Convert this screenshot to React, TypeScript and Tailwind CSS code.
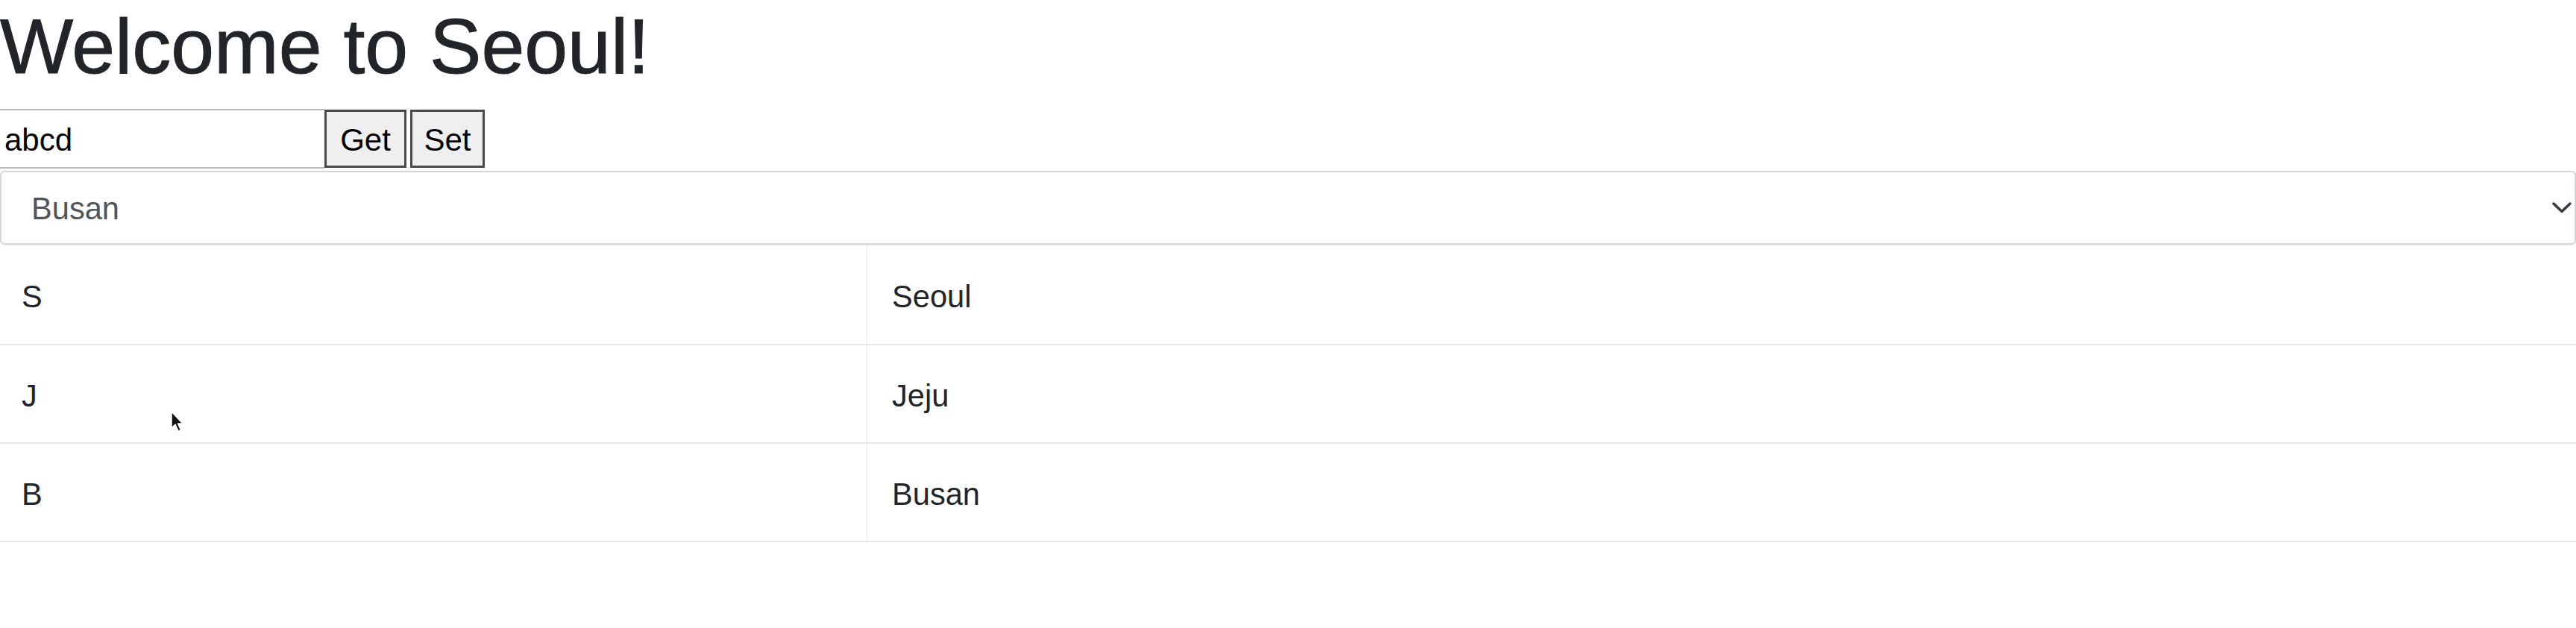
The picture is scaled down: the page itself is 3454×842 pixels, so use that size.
import React from "react";

const rows = [
  { k: "S", v: "Seoul", h: "h-[135px]" },
  { k: "J", v: "Jeju", h: "h-[132px]" },
  { k: "B", v: "Busan", h: "h-[132px]" },
];

export default function App() {
  return (
    <div className="relative w-[3454px] h-[842px] overflow-hidden bg-white text-[#212529] font-['Liberation_Sans',Arial,Helvetica,sans-serif]">
      <h1 className="m-0 mb-[21px] text-[104px] leading-[1.2] font-normal text-[#212529] [-webkit-text-stroke:1px_#212529]">
        Welcome to Seoul!
      </h1>

      <div className="flex items-center h-[80px]">
        <input
          readOnly
          value="abcd"
          className="w-[435px] h-[80px] border-y-2 border-l-0 border-r-0 border-[#b8b8b8] pl-[6px] pt-[5px] text-[42px] text-black outline-none bg-white font-['Liberation_Sans',Arial,sans-serif]"
        />
        <button className="w-[110px] h-[78px] bg-[#efefef] border-[3px] border-[#4a4a4a] pt-[4px] text-[42px] text-black leading-none flex items-center justify-center font-['Liberation_Sans',Arial,sans-serif]">
          Get
        </button>
        <button className="ml-[5px] w-[100px] h-[78px] bg-[#efefef] border-[3px] border-[#4a4a4a] pt-[4px] text-[42px] text-black leading-none flex items-center justify-center font-['Liberation_Sans',Arial,sans-serif]">
          Set
        </button>
      </div>

      <div className="mt-[3px] h-[99px] w-full border-2 border-[#d3d6da] rounded-[6px] flex items-center justify-between pl-[40px] pr-[4px] text-[41.6px] text-[#505559] shadow-[0_1px_2px_rgba(0,0,0,0.08)]">
        <span className="pt-[4px]">Busan</span>
        <svg width="26" height="15" viewBox="0 0 26 15" fill="none">
          <path d="M2 2 L13 12.5 L24 2" stroke="#343a40" strokeWidth="3.5" strokeLinecap="round" strokeLinejoin="round" />
        </svg>
      </div>

      <div className="flex flex-col">
        {rows.map((r) => (
          <div key={r.k} className={`flex ${r.h} border-b-2 border-[#e4e6e9]`}>
            <div className="w-[1163px] shrink-0 border-r border-[#e9ecef] flex items-center pl-[29px] pt-[7px] text-[41.6px]">
              {r.k}
            </div>
            <div className="flex-1 flex items-center pl-[33px] pt-[7px] text-[41.6px]">
              {r.v}
            </div>
          </div>
        ))}
      </div>

      <svg
        className="absolute left-[229px] top-[551px]"
        width="18"
        height="30"
        viewBox="0 0 18 30"
      >
        <path
          d="M1 1 L1 23 L6 18 L10 27 L13.5 25.5 L9.5 17 L16 17 Z"
          fill="#111"
          stroke="#fff"
          strokeWidth="1.5"
          strokeLinejoin="round"
        />
      </svg>
    </div>
  );
}
